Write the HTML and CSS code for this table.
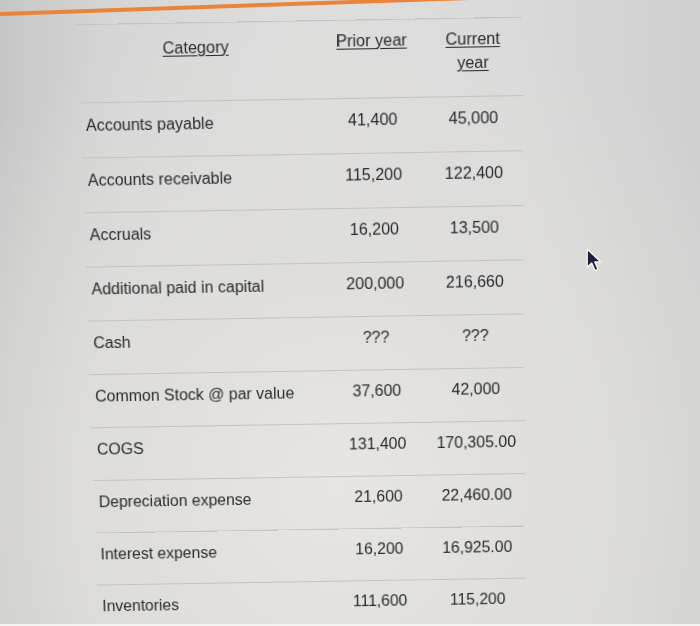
FILE: index.html
```html
<!DOCTYPE html>
<html lang="en">
<head>
<meta charset="utf-8">
<title>Balance sheet categories</title>
<link rel="stylesheet" href="styles.css">
</head>
<body>
<div class="photo">
  <div class="accent-bar"></div>
  <div class="sheet">
    <div class="row head">
      <div class="cell cat-head"><span class="link">Category</span></div>
      <div class="cell num-head"><span class="link">Prior year</span></div>
      <div class="cell num-head"><span class="link">Current<br>year</span></div>
    </div>
    <div class="row">
      <div class="cell label">Accounts payable</div>
      <div class="cell num">41,400</div>
      <div class="cell num">45,000</div>
    </div>
    <div class="row">
      <div class="cell label">Accounts receivable</div>
      <div class="cell num">115,200</div>
      <div class="cell num">122,400</div>
    </div>
    <div class="row">
      <div class="cell label">Accruals</div>
      <div class="cell num">16,200</div>
      <div class="cell num">13,500</div>
    </div>
    <div class="row">
      <div class="cell label">Additional paid in capital</div>
      <div class="cell num">200,000</div>
      <div class="cell num">216,660</div>
    </div>
    <div class="row">
      <div class="cell label">Cash</div>
      <div class="cell num">???</div>
      <div class="cell num">???</div>
    </div>
    <div class="row">
      <div class="cell label">Common Stock @ par value</div>
      <div class="cell num">37,600</div>
      <div class="cell num">42,000</div>
    </div>
    <div class="row">
      <div class="cell label">COGS</div>
      <div class="cell num">131,400</div>
      <div class="cell num">170,305.00</div>
    </div>
    <div class="row">
      <div class="cell label">Depreciation expense</div>
      <div class="cell num">21,600</div>
      <div class="cell num">22,460.00</div>
    </div>
    <div class="row">
      <div class="cell label">Interest expense</div>
      <div class="cell num">16,200</div>
      <div class="cell num">16,925.00</div>
    </div>
    <div class="row">
      <div class="cell label">Inventories</div>
      <div class="cell num">111,600</div>
      <div class="cell num">115,200</div>
    </div>
  </div>
  <svg class="cursor" viewBox="0 0 14 22" width="16" height="25" aria-hidden="true">
    <path d="M1 1 L1 17 L5 13.2 L8 20 L10.6 18.9 L7.7 12.3 L13 12.3 Z" fill="#1b2038" stroke="#f4f4f4" stroke-width="1.2" stroke-linejoin="round"/>
  </svg>
</div>
</body>
</html>
```

FILE: styles.css
```css
html, body {
  margin: 0;
  padding: 0;
}

body {
  width: 700px;
  height: 626px;
  overflow: hidden;
  font-family: "Liberation Sans", Arial, sans-serif;
  color: #2b2b2e;
}

.photo {
  position: relative;
  height: 624px;
  overflow: hidden;
  border-bottom: 2px solid #f3f3f1;
  background:
    radial-gradient(ellipse 70% 80% at 48% 78%, #e7e6e2 0%, #dfdedb 45%, rgba(223, 222, 219, 0) 100%),
    linear-gradient(90deg, #c6c6c6 0%, #d6d6d6 16%, #dedede 45%, #dadada 75%, #cfcfcf 100%);
}

.accent-bar {
  width: 760px;
  height: 3.5px;
  margin-top: 12px;
  background: #e8843c;
  transform: rotate(-1.95deg);
  transform-origin: 0 50%;
}

.sheet {
  width: 437px;
  margin: 9.5px 0 0 86.5px;
  transform: perspective(1000px) rotateX(-3.8deg) skew(1.15deg, -0.95deg);
  transform-origin: 50% 277px;
}

.row {
  display: grid;
  grid-template-columns: 231px 115px 84px 1fr;
  height: 54px;
  box-sizing: border-box;
  border-top: 1.4px solid #c3c3c3;
  font-size: 16px;
  line-height: 20px;
}

.row.head {
  height: 76px;
  line-height: 23px;
}

.cell {
  padding-top: 11px;
  white-space: nowrap;
}

.label {
  padding-left: 5px;
  padding-top: 12px;
}

.num {
  text-align: center;
}

.cat-head {
  text-align: center;
  padding-top: 11.5px;
}

.num-head {
  text-align: center;
  padding-top: 7.5px;
}

.link {
  text-decoration: underline;
  text-decoration-thickness: 1px;
  text-underline-offset: 2px;
}

.cursor {
  position: absolute;
  left: 586px;
  top: 248px;
}
```
